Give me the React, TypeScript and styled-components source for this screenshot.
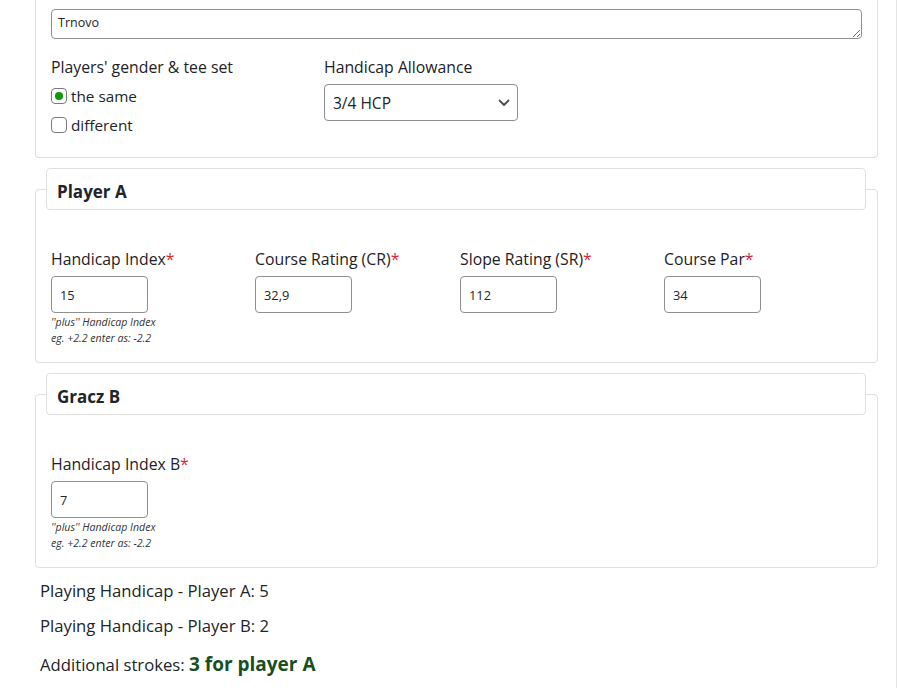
import React from "react";
import styled, { createGlobalStyle } from "styled-components";

const Global = createGlobalStyle`
  html, body { margin: 0; padding: 0; background: #fff; }
  body { font-family: "Open Sans", "Liberation Sans", sans-serif; color: #212529; }
  * { box-sizing: border-box; }
`;

const Page = styled.div`
  width: 897px;
  min-height: 688px;
  padding: 0 18px 0 35px;
  border-right: 1px solid #e6e6e6;
  display: flex;
  flex-direction: column;
`;

const TopCard = styled.div`
  border: 1px solid #dfdfdf;
  border-top: none;
  border-radius: 0 0 4px 4px;
  padding: 9px 15px 20px;
  display: flex;
  flex-direction: column;
  gap: 16px;
`;

const TextArea = styled.textarea`
  width: 100%;
  height: 30px;
  border: 1px solid #8f8f8f;
  border-radius: 4px;
  padding: 4px 6px;
  font-family: "Open Sans", "Liberation Sans", sans-serif;
  font-size: 12.5px;
  color: #212529;
  resize: vertical;
  display: block;
`;

const OptionsRow = styled.div`
  display: grid;
  grid-template-columns: 273px auto;
`;

const Group = styled.div`
  display: flex;
  flex-direction: column;
  gap: 5px;
`;

const Label = styled.div`
  font-size: 15.8px;
  line-height: 24px;
  color: #1e2226;
  white-space: nowrap;
`;

const Req = styled.span`
  color: #e0262b;
`;

const RadioRow = styled.label`
  display: flex;
  align-items: center;
  gap: 4px;
  height: 24px;
  font-size: 15.3px;
  color: #212529;
`;

const RadioBox = styled.span<{ $checked?: boolean }>`
  width: 16px;
  height: 16px;
  border: 1px solid #7a7a7a;
  border-radius: 4px;
  background: #fff;
  display: flex;
  align-items: center;
  justify-content: center;
  &::after {
    content: "";
    width: 8px;
    height: 8px;
    border-radius: 50%;
    background: ${(p) => (p.$checked ? "#0c9a0c" : "transparent")};
  }
`;

const RadioList = styled.div`
  display: flex;
  flex-direction: column;
  gap: 5px;
`;

const Select = styled.div`
  width: 194px;
  height: 37px;
  border: 1px solid #8f8f8f;
  border-radius: 4px;
  padding: 0 7px 0 8px;
  display: flex;
  align-items: center;
  justify-content: space-between;
  font-size: 15.5px;
  color: #212529;
`;

const Fieldset = styled.fieldset`
  margin: 10px 0 0;
  border: 1px solid #dfdfdf;
  border-radius: 4px;
  padding: 0 15px 16px;
  min-width: 0;
`;

const Legend = styled.legend`
  width: calc(100% + 9px);
  margin-left: -5px;
  height: 42px;
  padding: 4px 10px 0;
  border: 1px solid #dfdfdf;
  border-radius: 4px;
  background: #fff;
  font-size: 17px;
  font-weight: 700;
  display: flex;
  align-items: center;
  color: #212529;
`;

const Fields = styled.div`
  margin-top: 37px;
  display: grid;
  grid-template-columns: 204px 205px 204px 1fr;
`;

const Input = styled.div`
  width: 97px;
  height: 37px;
  border: 1px solid #8f8f8f;
  border-radius: 4px;
  padding: 0 8px;
  display: flex;
  align-items: center;
  font-size: 12.8px;
  color: #212529;
`;

const Help = styled.div`
  margin-top: -4px;
  font-size: 10.6px;
  font-style: italic;
  line-height: 16px;
  color: #333;
`;

const Results = styled.div`
  padding: 11px 5px 0;
  display: flex;
  flex-direction: column;
  gap: 11px;
`;

const ResultLine = styled.div<{ $big?: boolean }>`
  font-size: 16.7px;
  line-height: ${(p) => (p.$big ? "30px" : "24px")};
  color: #212529;
`;

const Strong = styled.span`
  font-size: 19px;
  font-weight: 700;
  color: #16501f;
`;

const Chevron = () => (
  <svg width="12" height="8" viewBox="0 0 12 8">
    <path d="M1.5 1.5 L6 6 L10.5 1.5" fill="none" stroke="#4a4f55" strokeWidth="1.8" strokeLinecap="round" strokeLinejoin="round" />
  </svg>
);

type F = { label: string; value: string; help?: boolean };

const Field = ({ label, value, help }: F) => (
  <Group>
    <Label>
      {label}
      <Req>*</Req>
    </Label>
    <Input>{value}</Input>
    {help && (
      <Help>
        ''plus'' Handicap Index
        <br />
        eg. +2.2 enter as: -2.2
      </Help>
    )}
  </Group>
);

export default function App() {
  return (
    <>
      <Global />
      <Page>
        <TopCard>
          <TextArea defaultValue="Trnovo" />
          <OptionsRow>
            <Group>
              <Label>Players' gender &amp; tee set</Label>
              <RadioList>
                <RadioRow>
                  <RadioBox $checked />
                  the same
                </RadioRow>
                <RadioRow>
                  <RadioBox />
                  different
                </RadioRow>
              </RadioList>
            </Group>
            <Group>
              <Label>Handicap Allowance</Label>
              <Select>
                <span>3/4 HCP</span>
                <Chevron />
              </Select>
            </Group>
          </OptionsRow>
        </TopCard>

        <Fieldset>
          <Legend>Player A</Legend>
          <Fields>
            <Field label="Handicap Index" value="15" help />
            <Field label="Course Rating (CR)" value="32,9" />
            <Field label="Slope Rating (SR)" value="112" />
            <Field label="Course Par" value="34" />
          </Fields>
        </Fieldset>

        <Fieldset>
          <Legend>Gracz B</Legend>
          <Fields>
            <Field label="Handicap Index B" value="7" help />
          </Fields>
        </Fieldset>

        <Results>
          <ResultLine>Playing Handicap - Player A: 5</ResultLine>
          <ResultLine>Playing Handicap - Player B: 2</ResultLine>
          <ResultLine $big>
            Additional strokes: <Strong>3 for player A</Strong>
          </ResultLine>
        </Results>
      </Page>
    </>
  );
}
